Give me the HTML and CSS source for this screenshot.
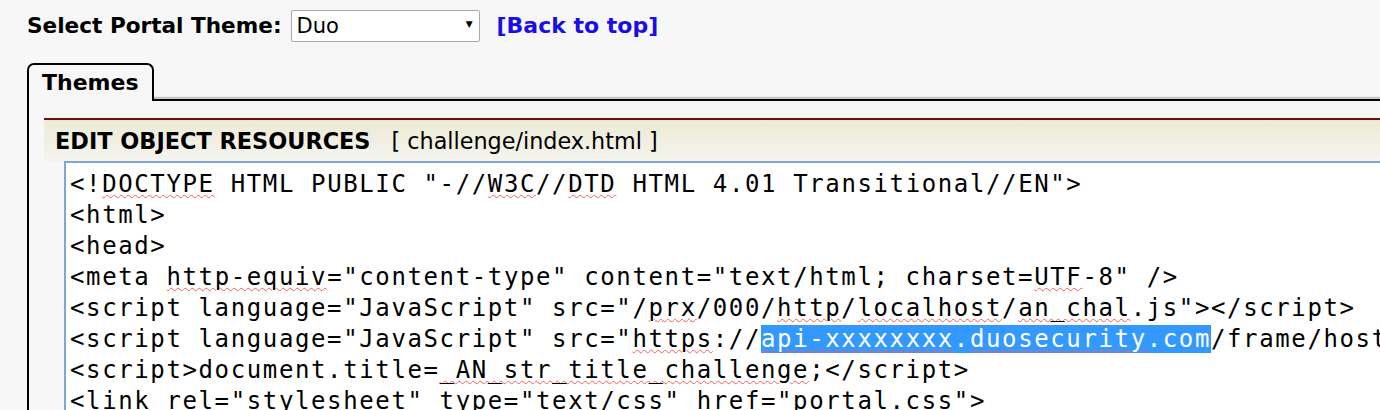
FILE: index.html
```html
<!DOCTYPE html>
<html>
<head lang="en">
    <meta charset="UTF-8">
    <title>Portal Themes</title>
    <link rel="stylesheet" href="styles.css">
</head>
<body>

<header class="toolbar">
    <label class="theme-label">Select Portal Theme:</label>
    <div class="select">Duo<span class="arrow">&#9660;</span></div>
    <a class="top-link" href="#">[Back to top]</a>
</header>

<section class="tabs">
    <div class="tab-row">
        <div class="tab">Themes</div>
        <div class="tab-fill"></div>
    </div>
    <div class="panel">
        <div class="panel-head">
            <span class="panel-title">EDIT OBJECT RESOURCES</span>
            <span class="panel-file">[ challenge/index.html ]</span>
        </div>
        <div class="editor">
<pre class="code">&lt;!<span class="sp">DOCTYPE</span> HTML PUBLIC "-//<span class="sp">W3C</span>//<span class="sp">DTD</span> HTML 4.01 Transitional//EN"&gt;
&lt;html&gt;
&lt;head&gt;
&lt;meta <span class="sp">http-equiv</span>="content-type" content="text/html; charset=<span class="sp">UTF</span>-8" /&gt;
&lt;script language="JavaScript" src="/<span class="sp">prx</span>/000/<span class="sp">http</span>/<span class="sp">localhost</span>/<span class="sp">an_chal</span>.js"&gt;&lt;/script&gt;
&lt;script language="JavaScript" src="<span class="sp">https</span>://<span class="sel"><span class="sp">api-xxxxxxxx</span>.<span class="sp">duosecurity</span>.com</span>/frame/hosted/Duo-Web-v2.js"&gt;&lt;/script&gt;
&lt;script&gt;document.title=<span class="sp">_AN_str_title_challenge</span>;&lt;/script&gt;
&lt;link rel="stylesheet" type="text/css" href="portal.css"&gt;
&lt;/head&gt;</pre>
        </div>
    </div>
</section>

</body>
</html>
```

FILE: styles.css
```css
* {
    box-sizing: border-box;
}
html, body {
    height: 100%;
    overflow: hidden;
}
body {
    margin: 0;
    background-color: #f7f7f7;
    font-family: "DejaVu Sans", Verdana, sans-serif;
    color: #000;
}
.toolbar {
    display: flex;
    align-items: center;
    height: 51px;
    padding: 0 0 0 27px;
}
.theme-label {
    font-size: 21.6px;
    font-weight: bold;
    margin-right: 9px;
}
.select {
    display: flex;
    align-items: center;
    justify-content: space-between;
    width: 189px;
    height: 32px;
    padding: 0 6px 0 5px;
    background: #fff;
    border: 1px solid #a9a9a9;
    border-radius: 2px;
    font-size: 21px;
}
.arrow {
    font-size: 9px;
    margin-top: -4px;
}
.top-link {
    margin-left: 17px;
    font-size: 22px;
    font-weight: bold;
    color: #1a0ee6;
    text-decoration: none;
}
.tabs {
    padding: 12px 0 0 27px;
}
.tab-row {
    display: flex;
    align-items: flex-end;
}
.tab {
    width: 127px;
    height: 38px;
    padding: 5px 0 0 13px;
    border: 2px solid #000;
    border-bottom: none;
    border-radius: 7px 7px 0 0;
    background: #f7f7f7;
    font-size: 22px;
    font-weight: bold;
}
.tab-fill {
    flex: 1;
    height: 6px;
    border-bottom: 2px solid #000;
    background: linear-gradient(to top, #c6c6c6 0 2px, #ececec 2px 3px, transparent 3px);
}
.panel {
    border-left: 2px solid #000;
    padding: 17px 0 0 15px;
    height: 320px;
}
.panel-head {
    display: flex;
    align-items: center;
    height: 43px;
    padding: 0 0 0 11px;
    border-top: 2px solid #6a1010;
    box-shadow: inset 0 1px 0 #f4e3c6;
    background: linear-gradient(to bottom, #ecebd5, #f4f4ef);
}
.panel-title {
    font-size: 22.4px;
    font-weight: bold;
    margin-right: 21px;
}
.panel-file {
    font-size: 22.3px;
}
.editor {
    margin-left: 20px;
    height: 300px;
    background: #fff;
    border-top: 2px solid #80a5d8;
    border-left: 2px solid #80a5d8;
    overflow: hidden;
}
.code {
    margin: 0;
    padding: 6px 0 0 4px;
    font-family: "DejaVu Sans Mono", monospace;
    font-size: 24px;
    letter-spacing: 1.62px;
    line-height: 31px;
    white-space: pre;
}
.sp {
    text-decoration: underline wavy #f06060;
    text-decoration-thickness: 1px;
    text-underline-offset: 2px;
}
.sel {
    background: #3399ff;
    color: #fff;
}
```
